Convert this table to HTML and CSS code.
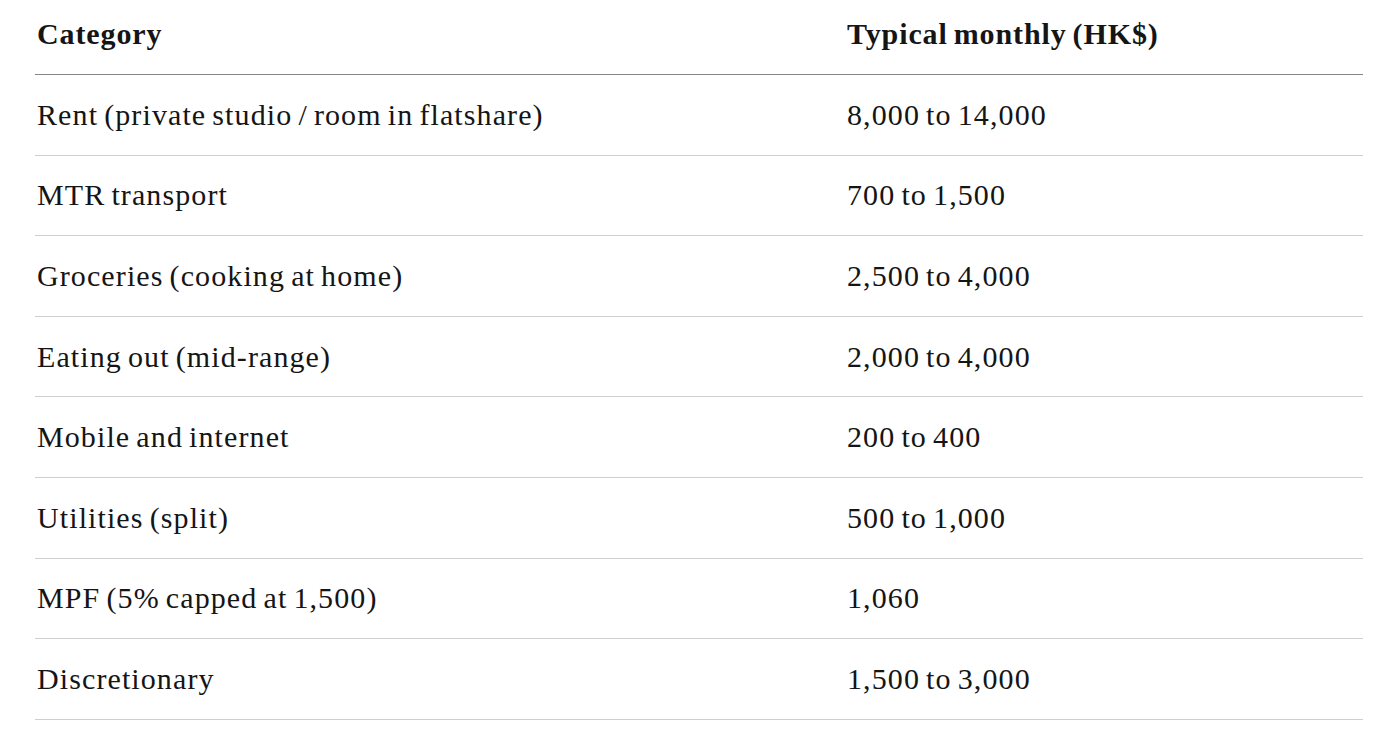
FILE: index.html
```html
<!DOCTYPE html>
<html lang="en">
<head>
<meta charset="utf-8">
<title>Monthly costs</title>
<link rel="stylesheet" href="styles.css">
</head>
<body>
<div class="table">
  <div class="row head">
    <div class="cell">Category</div>
    <div class="cell">Typical monthly (HK$)</div>
  </div>
  <div class="row">
    <div class="cell">Rent (private studio / room in flatshare)</div>
    <div class="cell">8,000 to 14,000</div>
  </div>
  <div class="row">
    <div class="cell">MTR transport</div>
    <div class="cell">700 to 1,500</div>
  </div>
  <div class="row">
    <div class="cell">Groceries (cooking at home)</div>
    <div class="cell">2,500 to 4,000</div>
  </div>
  <div class="row">
    <div class="cell">Eating out (mid-range)</div>
    <div class="cell">2,000 to 4,000</div>
  </div>
  <div class="row">
    <div class="cell">Mobile and internet</div>
    <div class="cell">200 to 400</div>
  </div>
  <div class="row">
    <div class="cell">Utilities (split)</div>
    <div class="cell">500 to 1,000</div>
  </div>
  <div class="row">
    <div class="cell">MPF (5% capped at 1,500)</div>
    <div class="cell">1,060</div>
  </div>
  <div class="row">
    <div class="cell">Discretionary</div>
    <div class="cell">1,500 to 3,000</div>
  </div>
</div>
</body>
</html>
```

FILE: styles.css
```css
html, body {
  margin: 0;
  padding: 0;
  background: #ffffff;
}
body {
  font-family: "Liberation Serif", "DejaVu Serif", serif;
  color: #151515;
}
.table {
  margin-left: 35px;
  width: 1328px;
}
.row {
  display: grid;
  grid-template-columns: 810px 1fr;
  height: 79.6px;
  border-bottom: 1px solid #cfcfcf;
  align-items: center;
}
.row.head {
  height: 74px;
  border-bottom: 1px solid #858585;
  align-items: start;
}
.head .cell {
  font-weight: bold;
  padding-top: 14px;
  letter-spacing: 0.9px;
}
.cell {
  padding-left: 2px;
  font-size: 30px;
  line-height: 40px;
  letter-spacing: 1.1px;
  word-spacing: -2.5px;
}
```
